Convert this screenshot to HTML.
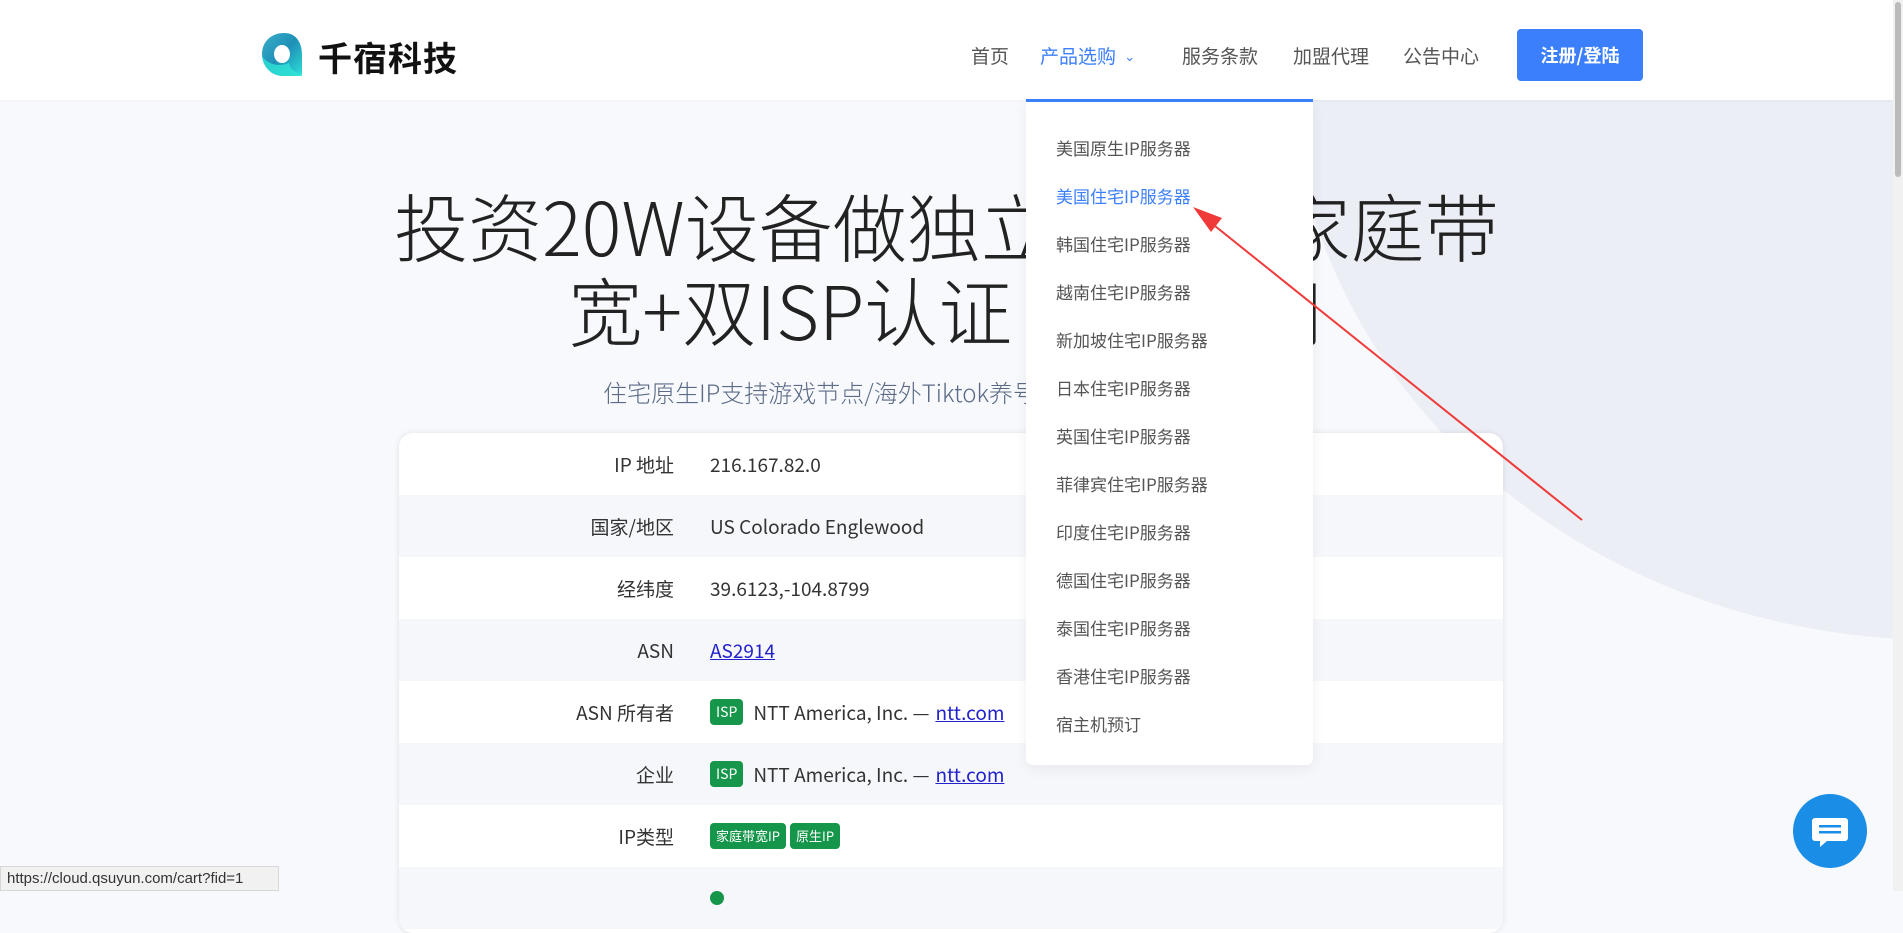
<!DOCTYPE html>
<html><head><meta charset="utf-8"><style>
*{margin:0;padding:0;box-sizing:border-box}
body{width:1903px;height:891px;overflow:hidden;position:relative;background:#f8f9fc;font-family:"Liberation Sans","Noto Sans CJK SC",sans-serif;}
.bgshape{position:absolute;left:1290px;top:-520px;width:1300px;height:1160px;border-radius:50%;background:#eceef6;}
.header{position:absolute;left:0;top:0;width:1893px;height:100px;background:#fff;box-shadow:0 1px 3px rgba(0,0,0,.04);z-index:5}
.logo{position:absolute;left:260px;top:32px}
.logotxt{position:absolute;left:318px;top:32px;font-size:34px;font-weight:bold;color:#111;letter-spacing:1px;font-family:"Noto Sans CJK SC",sans-serif}
.nav{position:absolute;top:42px;font-size:19px;color:#555;font-family:"Noto Sans CJK SC",sans-serif}
.btn{position:absolute;left:1517px;top:29px;width:126px;height:52px;background:#3c7ffc;border-radius:4px;color:#fff;font-weight:bold;font-size:18px;text-align:center;line-height:52px;font-family:"Noto Sans CJK SC",sans-serif}
.uline{position:absolute;left:1026px;top:99px;width:287px;height:3px;background:#3c7ffc;z-index:7}
.dd{position:absolute;left:1026px;top:101px;width:287px;height:664px;background:#fff;border-radius:0 0 7px 7px;box-shadow:0 4px 14px rgba(0,0,0,.06);z-index:6}
.dd div{position:absolute;left:30px;font-size:17px;color:#555;font-family:"Noto Sans CJK SC",sans-serif}
h1{position:absolute;left:0;width:1893px;top:183px;text-align:center;font-size:74px;font-weight:300;color:#222;line-height:84px;font-family:"Noto Sans CJK SC",sans-serif}
.sub{position:absolute;left:0;width:1893px;top:374px;text-align:center;font-size:24px;font-weight:300;color:#5b6b86;font-family:"Noto Sans CJK SC",sans-serif}
.card{position:absolute;left:399px;top:433px;width:1104px;height:500px;background:#fff;border-radius:14px;box-shadow:0 0 6px rgba(0,0,0,.1);overflow:hidden}
.row{height:62px;display:flex;align-items:center;font-size:19px;color:#333;font-family:"Noto Sans CJK SC",sans-serif}
.row:nth-child(even){background:#f5f7fb}
.row .l{width:275px;text-align:right;white-space:nowrap}
.row .v{margin-left:36px;white-space:nowrap;display:flex;align-items:center}
a{color:#2222cc;text-decoration:underline}
.tag{display:inline-block;background:#15964a;color:#fff;font-size:13px;border-radius:4px;padding:0 6px;height:26px;line-height:26px;margin-right:6px}
.chat{position:absolute;left:1793px;top:794px;width:74px;height:74px;border-radius:50%;background:#1a8ee6;z-index:8}
.status{position:absolute;left:0;top:866px;width:279px;height:25px;background:#f1f1f1;border:1px solid #d6d6d6;font-size:15px;color:#333;line-height:23px;padding-left:6px;z-index:9}
.sb{position:absolute;left:1893px;top:0;width:10px;height:891px;background:#f1f1f1;z-index:9}
.sb div{position:absolute;left:2px;top:2px;width:6px;height:175px;background:#bbb;border-radius:3px}
</style></head><body>
<div class="bgshape"></div>
<h1>投资20W设备做独立站美国家庭带<br>宽+双ISP认证 个人专用</h1>
<div class="sub">住宅原生IP支持游戏节点/海外Tiktok养号/跨境电商/社媒运营等...</div>
<div class="card">
<div class="row"><span class="l">IP 地址</span><span class="v">216.167.82.0</span></div>
<div class="row"><span class="l">国家/地区</span><span class="v">US Colorado Englewood</span></div>
<div class="row"><span class="l">经纬度</span><span class="v">39.6123,-104.8799</span></div>
<div class="row"><span class="l">ASN</span><span class="v"><a>AS2914</a></span></div>
<div class="row"><span class="l">ASN 所有者</span><span class="v"><span class="tag" style="font-size:14px;margin-right:10px">ISP</span>NTT America, Inc. — <a style="margin-left:6px">ntt.com</a></span></div>
<div class="row"><span class="l">企业</span><span class="v"><span class="tag" style="font-size:14px;margin-right:10px">ISP</span>NTT America, Inc. — <a style="margin-left:6px">ntt.com</a></span></div>
<div class="row"><span class="l">IP类型</span><span class="v"><span class="tag" style="margin-right:4px">家庭带宽IP</span><span class="tag">原生IP</span></span></div>
<div class="row"><span class="l"></span><span class="v"><span style="display:inline-block;width:14px;height:14px;border-radius:50%;background:#15964a"></span></span></div>
</div>
<div class="header">
<svg class="logo" width="48" height="46" viewBox="0 0 48 46"><defs><linearGradient id="g" x1="0" y1="0" x2="1" y2="1"><stop offset="0" stop-color="#3ab0c8"/><stop offset=".5" stop-color="#1f8fb8"/><stop offset="1" stop-color="#2de0d8"/></linearGradient></defs><path d="M24 1C11 1 2 10 2 22s9 22 21 22h11c4 0 8 0 8-3V24C42 10 36 1 24 1z" fill="url(#g)"/><path d="M2 22c0 12 9 22 21 22h19v-3c-8 0-12-4-13-10-14 6-27-3-27-9z" fill="#2ee3d6" opacity=".8"/><ellipse cx="22" cy="22" rx="8" ry="9" fill="#fff"/></svg>
<div class="logotxt">千宿科技</div>
<div class="nav" style="left:971px">首页</div>
<div class="nav" style="left:1040px;color:#3c7ffc">产品选购 <span style="font-size:13px;position:relative;top:-2px;margin-left:4px">&#8964;</span></div>
<div class="nav" style="left:1182px">服务条款</div>
<div class="nav" style="left:1293px">加盟代理</div>
<div class="nav" style="left:1403px">公告中心</div>
<div class="btn">注册/登陆</div>
</div>
<div class="uline"></div>
<div class="dd">
<div style="top:34px">美国原生IP服务器</div>
<div style="top:82px;color:#3c7ffc">美国住宅IP服务器</div>
<div style="top:130px">韩国住宅IP服务器</div>
<div style="top:178px">越南住宅IP服务器</div>
<div style="top:226px">新加坡住宅IP服务器</div>
<div style="top:274px">日本住宅IP服务器</div>
<div style="top:322px">英国住宅IP服务器</div>
<div style="top:370px">菲律宾住宅IP服务器</div>
<div style="top:418px">印度住宅IP服务器</div>
<div style="top:466px">德国住宅IP服务器</div>
<div style="top:514px">泰国住宅IP服务器</div>
<div style="top:562px">香港住宅IP服务器</div>
<div style="top:610px">宿主机预订</div>
</div>
<svg style="position:absolute;left:0;top:0;z-index:8" width="1903" height="891"><line x1="1582" y1="520" x2="1205" y2="218" stroke="#f03a3a" stroke-width="2"/><polygon points="1193,207 1222,218 1211,232" fill="#f03a3a"/></svg>
<div class="chat"><svg width="74" height="74" viewBox="0 0 74 74"><path d="M22 24h30a3 3 0 0 1 3 3v17a3 3 0 0 1-3 3H34l-7 6v-6h-5a3 3 0 0 1-3-3V27a3 3 0 0 1 3-3z" fill="#fff"/><rect x="26" y="31" width="22" height="2.5" fill="#1a8ee6"/><rect x="26" y="37" width="22" height="2.5" fill="#1a8ee6"/></svg></div>
<div class="status">https://cloud.qsuyun.com/cart?fid=1</div>
<div class="sb"><div></div></div>
</body></html>
